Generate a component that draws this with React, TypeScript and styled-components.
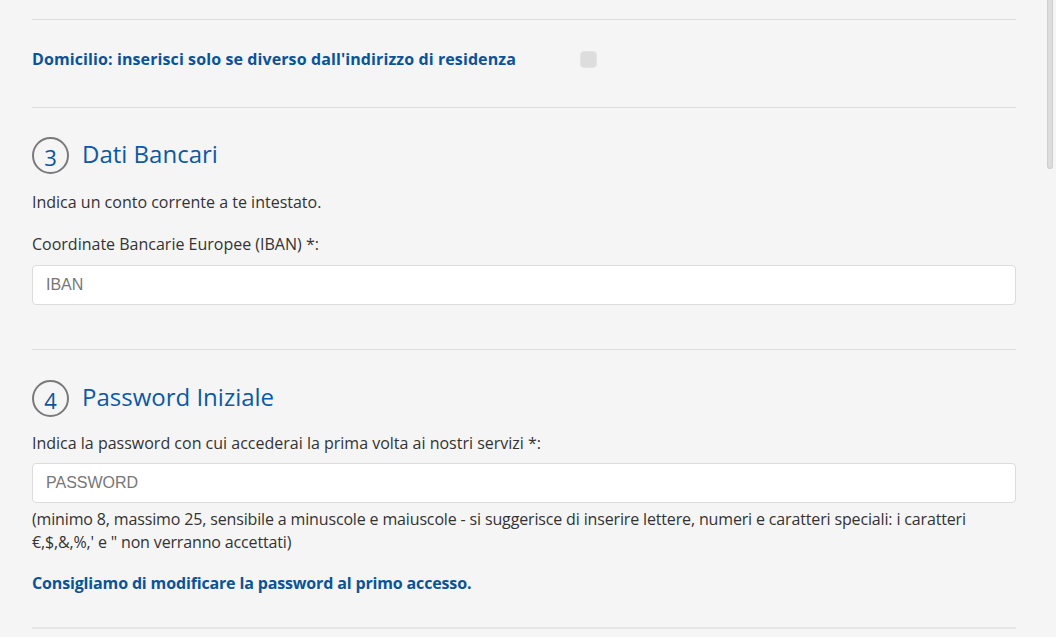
import styled, { createGlobalStyle } from "styled-components";

const GlobalStyle = createGlobalStyle`
  html, body {
    margin: 0;
    padding: 0;
    background: #f5f5f5;
    overflow: hidden;
  }
  body {
    font-family: "Open Sans", "Noto Sans", Arial, sans-serif;
    color: #333;
  }
`;

const Page = styled.div`
  height: 637px;
  padding: 19px 40px 0 32px;
  box-sizing: border-box;
`;

const Form = styled.div`
  width: 984px;
`;

const Divider = styled.div<{ thick?: boolean }>`
  height: ${({ thick }) => (thick ? 2 : 1)}px;
  background: ${({ thick }) => (thick ? "#e6e6e6" : "#dedede")};
`;

const CheckRow = styled.div`
  display: grid;
  grid-template-columns: 548px auto;
  align-items: center;
  padding: 29px 0 38px;
`;

const StrongText = styled.div<{ spacing?: number }>`
  font-weight: 700;
  font-size: 16px;
  line-height: 20px;
  color: #0a5399;
  letter-spacing: ${({ spacing = 0 }) => spacing}px;
`;

const Checkbox = styled.span`
  width: 17px;
  height: 17px;
  border-radius: 4px;
  background: #dddddd;
  border: 1px solid #e4e4e4;
  box-sizing: border-box;
`;

const Section = styled.div<{ top: number }>`
  padding-top: ${({ top }) => top}px;
`;

const Heading = styled.div`
  display: flex;
  align-items: center;
  gap: 13px;
`;

const Step = styled.span`
  width: 37px;
  height: 37px;
  border-radius: 50%;
  border: 2.5px solid #7a7a7a;
  box-sizing: border-box;
  display: flex;
  align-items: center;
  justify-content: center;
  font-size: 22px;
  font-weight: 400;
  color: #0b559e;
  padding-top: 3px;
`;

const Title = styled.h2`
  margin: 0 0 4px;
  font-size: 24px;
  font-weight: 400;
  color: #0b5aa5;
`;

const Text = styled.p<{ top: number }>`
  margin: ${({ top }) => top}px 0 0;
  font-size: 16px;
  line-height: 20px;
`;

const Input = styled.input<{ top: number }>`
  display: block;
  margin-top: ${({ top }) => top}px;
  width: 100%;
  height: 40px;
  box-sizing: border-box;
  border: 1px solid #dcdcdc;
  border-radius: 4px;
  background: #fff;
  padding: 0 13px;
  font-family: "Liberation Sans", Arial, sans-serif;
  font-size: 16px;
  outline: none;

  &::placeholder {
    color: #777;
  }
`;

const Help = styled.p`
  margin: 5px 0 0;
  font-size: 16px;
  line-height: 23px;
  letter-spacing: -0.15px;
  padding-right: 10px;
`;

const Notice = styled(StrongText)`
  margin-top: 19px;
`;

const Scrollbar = styled.div`
  position: fixed;
  top: 0;
  right: 3px;
  width: 4px;
  height: 168px;
  background: #dcdcdc;
  border: 1px solid #cfcfcf;
  border-top: none;
  border-radius: 0 0 3px 3px;
`;

export default function App() {
  return (
    <>
      <GlobalStyle />
      <Page>
        <Form>
          <Divider />
          <CheckRow>
            <StrongText spacing={0.1}>
              Domicilio: inserisci solo se diverso dall'indirizzo di residenza
            </StrongText>
            <Checkbox />
          </CheckRow>
          <Divider />

          <Section top={29}>
            <Heading>
              <Step>3</Step>
              <Title>Dati Bancari</Title>
            </Heading>
            <Text top={18}>Indica un conto corrente a te intestato.</Text>
            <Text top={22}>Coordinate Bancarie Europee (IBAN) *:</Text>
            <Input top={11} placeholder="IBAN" />
          </Section>
          <Section top={44}>
            <Divider />
          </Section>

          <Section top={30}>
            <Heading>
              <Step>4</Step>
              <Title>Password Iniziale</Title>
            </Heading>
            <Text top={16}>
              Indica la password con cui accederai la prima volta ai nostri
              servizi *:
            </Text>
            <Input top={10} placeholder="PASSWORD" />
            <Help>
              (minimo 8, massimo 25, sensibile a minuscole e maiuscole - si
              suggerisce di inserire lettere, numeri e caratteri speciali: i
              caratteri €,$,&amp;,%,' e " non verranno accettati)
            </Help>
            <Notice spacing={-0.15}>
              Consigliamo di modificare la password al primo accesso.
            </Notice>
          </Section>
          <Section top={34}>
            <Divider thick />
          </Section>
        </Form>
      </Page>
      <Scrollbar />
    </>
  );
}
